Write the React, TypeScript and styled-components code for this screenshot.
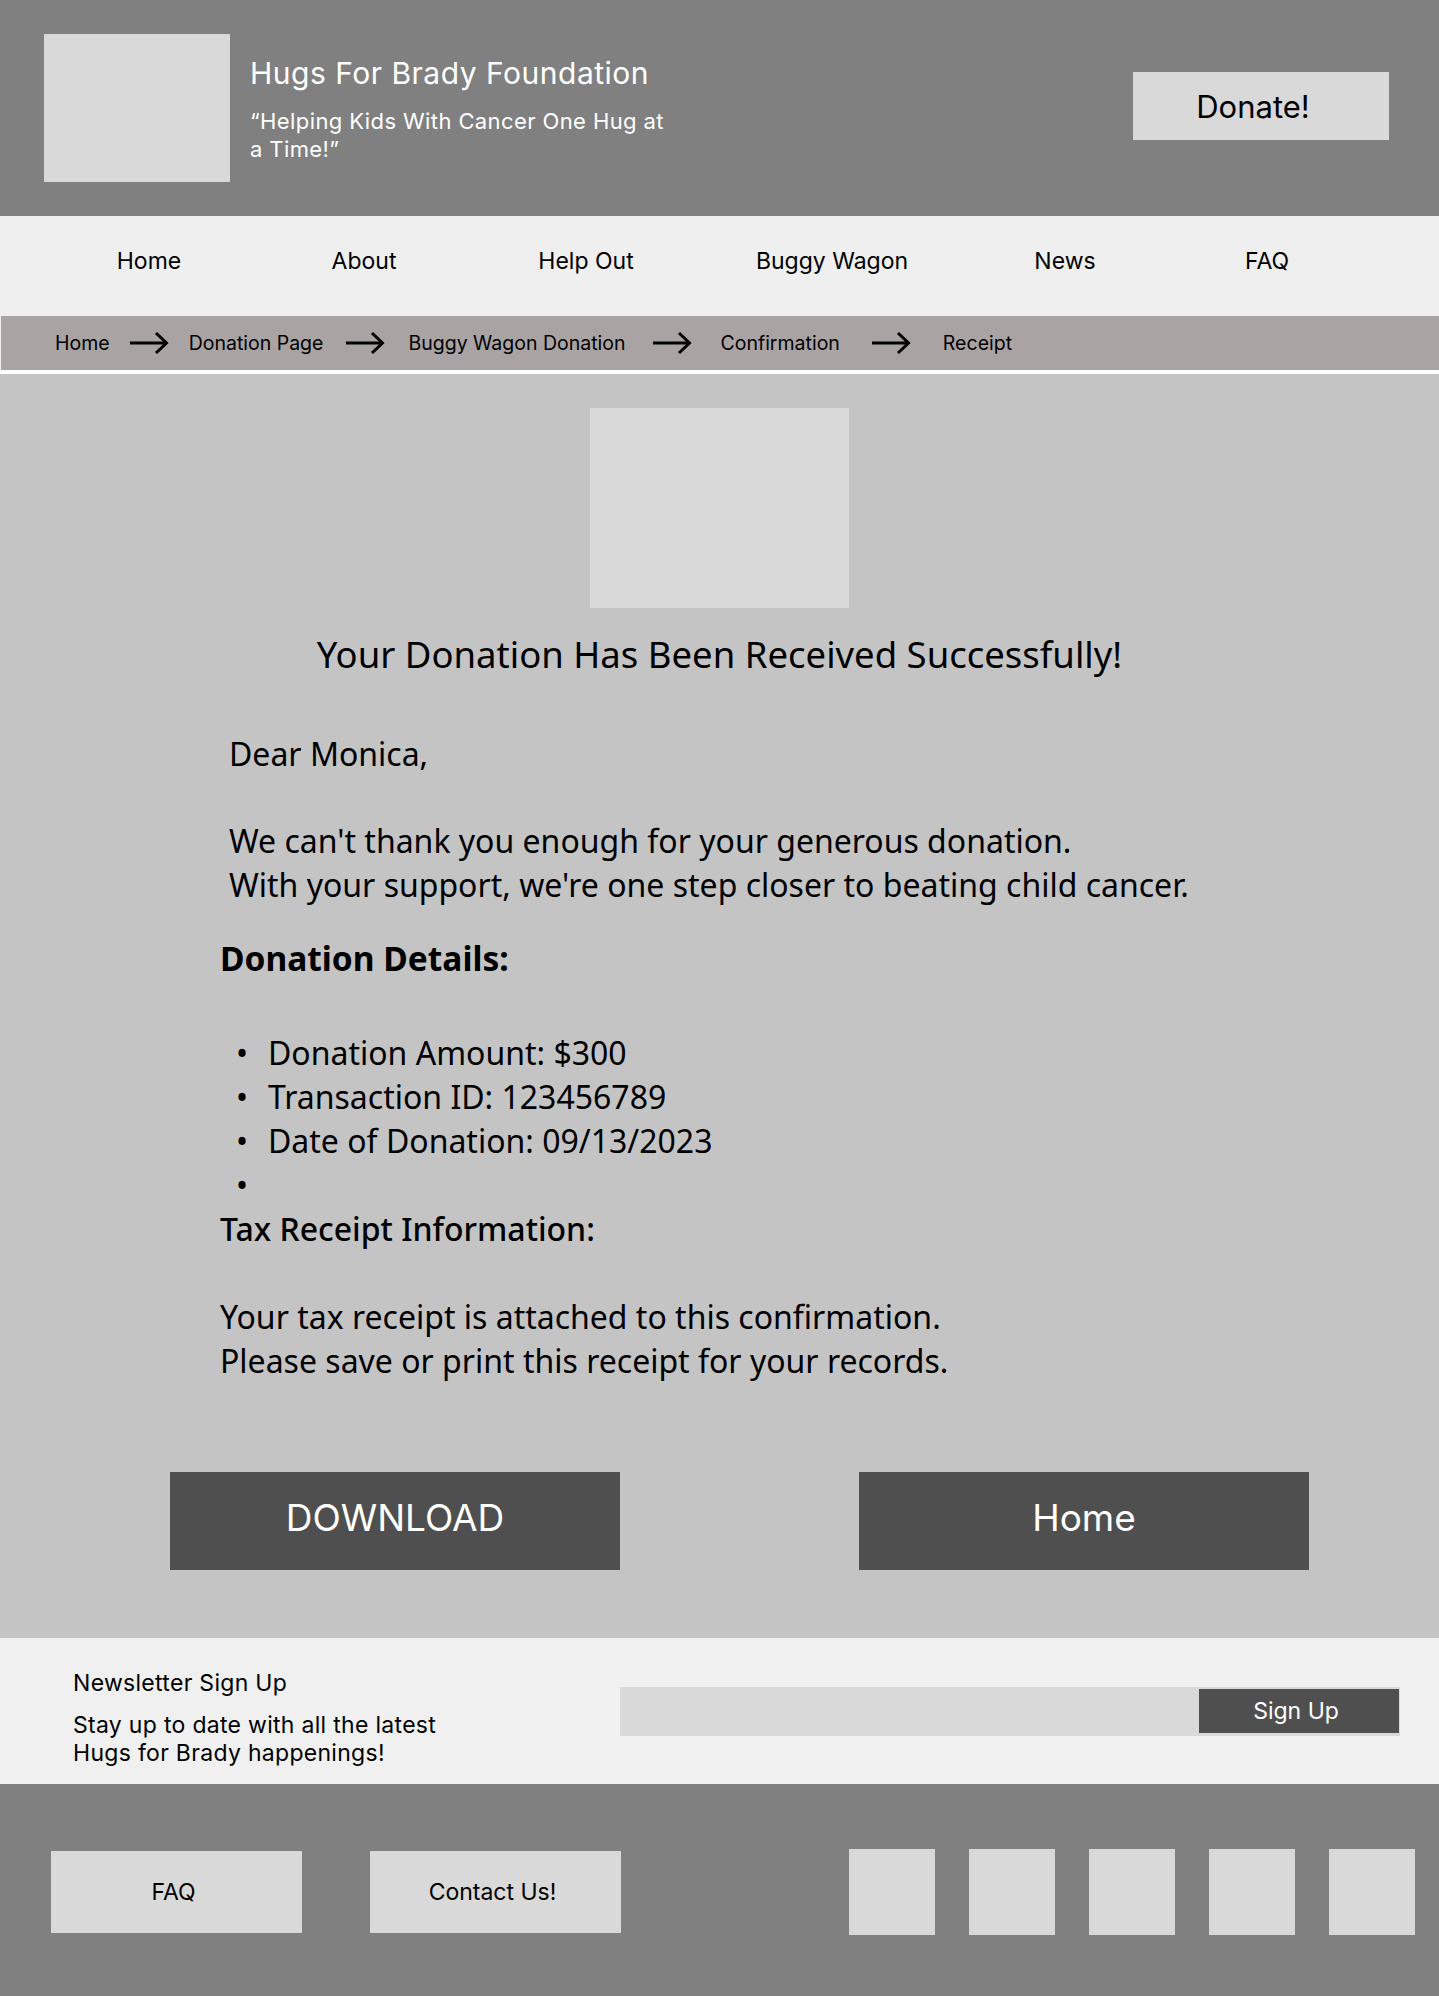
import React from "react";
import styled, { createGlobalStyle } from "styled-components";

const GlobalStyle = createGlobalStyle`
  html, body { margin: 0; padding: 0; }
  body { background: #c4c4c4; font-family: "Inter", "Liberation Sans", sans-serif; }
  *, *::before, *::after { box-sizing: border-box; }
`;

const UI = `"Inter", "Liberation Sans", sans-serif`;
const BODY = `"Noto Sans", "Open Sans", sans-serif`;

const Page = styled.div`
  width: 1439px;
  display: flex;
  flex-direction: column;
`;

/* Header */
const Header = styled.header`
  height: 216px;
  background: #808080;
  display: flex;
  align-items: flex-start;
  padding: 34px 50px 0 44px;
`;

const Logo = styled.div`
  width: 186px;
  height: 148px;
  background: #d9d9d9;
  flex: none;
`;

const Brand = styled.div`
  margin-left: 20px;
  display: flex;
  flex-direction: column;
  color: #fff;
  font-family: ${UI};
`;

const BrandTitle = styled.h1`
  margin: 22px 0 0;
  font-size: 30px;
  line-height: 34px;
  letter-spacing: 0.5px;
  font-weight: 400;
`;

const Tagline = styled.p`
  margin: 17px 0 0;
  font-size: 22px;
  line-height: 28px;
  letter-spacing: 0.4px;
  max-width: 424px;
`;

const DonateButton = styled.button`
  margin: 38px 0 0 auto;
  width: 256px;
  height: 68px;
  background: #d9d9d9;
  border: none;
  padding: 0 16px 0 0;
  font-family: ${UI};
  font-size: 31px;
  color: #000;
  cursor: pointer;
`;

/* Nav */
const Nav = styled.nav`
  height: 100px;
  background: #efefef;
  display: grid;
  grid-template-columns: 214px 216px 228px 264px 202px 202px;
  align-items: center;
  padding-left: 42px;
  padding-bottom: 10px;
`;

const NavLink = styled.a`
  text-align: center;
  font-family: ${UI};
  font-size: 23px;
  color: #000;
  text-decoration: none;
`;

/* Breadcrumb */
const Breadcrumb = styled.div`
  height: 58px;
  background: #a9a4a3;
  border-left: 1px solid #efefef;
  border-bottom: 4px solid #ffffff;
  display: flex;
  align-items: center;
  padding-left: 54px;
`;

const Crumb = styled.span`
  font-family: ${UI};
  font-size: 19.5px;
  color: #000;
`;

const ArrowWrap = styled.span<{ $space: number }>`
  display: flex;
  margin: 0 ${(p) => p.$space}px;
`;

const Arrow = ({ space }: { space: number }) => (
  <ArrowWrap $space={space}>
    <svg width="39" height="24" viewBox="0 0 39 24" fill="none">
      <path d="M0 12 H36" stroke="#000" strokeWidth="3" />
      <path d="M26 2 L36.5 12 L26 22" stroke="#000" strokeWidth="3" strokeLinejoin="miter" />
    </svg>
  </ArrowWrap>
);

/* Main */
const Main = styled.main`
  background: #c4c4c4;
  padding: 34px 0 68px;
  display: flex;
  flex-direction: column;
`;

const Hero = styled.div`
  width: 259px;
  height: 200px;
  background: #d9d9d9;
  align-self: center;
`;

const SuccessTitle = styled.h2`
  margin: 21px 0 0;
  font-family: ${BODY};
  font-size: 36.5px;
  line-height: normal;
  font-weight: 400;
  text-align: center;
  color: #000;
`;

const Receipt = styled.section`
  padding-left: 220px;
  font-family: ${BODY};
  color: #000;
`;

const Letter = styled.p`
  margin: 53px 0 0;
  padding-left: 9px;
  font-size: 32px;
  line-height: 43.6px;
`;

const DetailsHeading = styled.h3`
  margin: 29px 0 0;
  font-size: 33.5px;
  line-height: normal;
  font-weight: 700;
`;

const DetailList = styled.ul`
  margin: 50px 0 0;
  padding: 0;
  list-style: none;
  font-size: 32px;
  line-height: 44px;
`;

const DetailItem = styled.li`
  display: flex;
  height: 44px;
  &::before {
    content: "•";
    width: 48px;
    padding-left: 16px;
    flex: none;
  }
`;

const TaxBlock = styled.p`
  margin: 0;
  font-size: 32px;
  line-height: 44px;
`;

const TaxHeading = styled.span`
  font-weight: 500;
`;

const Actions = styled.div`
  margin-top: 89px;
  display: flex;
  gap: 239px;
  padding-left: 170px;
`;

const ActionButton = styled.button`
  width: 450px;
  height: 98px;
  background: #4f4f4f;
  border: none;
  color: #fff;
  font-family: ${UI};
  font-size: 37px;
  padding-bottom: 8px;
  cursor: pointer;
`;

/* Newsletter */
const Newsletter = styled.section`
  height: 146px;
  background: #f0f0f0;
  display: flex;
  align-items: flex-start;
  padding: 31px 0 0 73px;
`;

const NewsText = styled.div`
  width: 547px;
  font-family: ${UI};
  color: #000;
  font-size: 23px;
  letter-spacing: 0.3px;
`;

const NewsHeading = styled.h4`
  margin: 0;
  font-size: 23px;
  line-height: 28px;
  font-weight: 400;
`;

const NewsBlurb = styled.p`
  margin: 14px 0 0;
  font-size: 23px;
  line-height: 28px;
`;

const EmailField = styled.div`
  margin-top: 18px;
  width: 780px;
  height: 49px;
  background: #d9d9d9;
  display: flex;
  justify-content: flex-end;
  padding: 2px 1px 3px 0;
`;

const SignUpButton = styled.button`
  width: 200px;
  height: 44px;
  background: #4f4f4f;
  border: none;
  color: #fff;
  font-family: ${UI};
  font-size: 23px;
  padding: 0 6px 0 0;
  cursor: pointer;
`;

/* Footer */
const Footer = styled.footer`
  height: 213px;
  background: #808080;
  display: flex;
  align-items: center;
  padding: 2px 0 0 51px;
`;

const FooterLink = styled.a`
  width: 251px;
  height: 82px;
  background: #d9d9d9;
  display: flex;
  align-items: center;
  justify-content: center;
  padding-right: 6px;
  font-family: ${UI};
  font-size: 23px;
  color: #000;
  text-decoration: none;
  & + & { margin-left: 68px; }
`;

const Socials = styled.div`
  margin-left: 228px;
  display: flex;
  gap: 34px;
`;

const SocialIcon = styled.div`
  width: 86px;
  height: 86px;
  background: #d9d9d9;
`;

const navItems = ["Home", "About", "Help Out", "Buggy Wagon", "News", "FAQ"];
const crumbs = ["Home", "Donation Page", "Buggy Wagon Donation", "Confirmation", "Receipt"];
const arrowSpace = [0, 20, 23, 28, 32];
const details = ["Donation Amount: $300", "Transaction ID: 123456789", "Date of Donation: 09/13/2023", ""];

export default function App() {
  return (
    <Page>
      <GlobalStyle />
      <Header>
        <Logo />
        <Brand>
          <BrandTitle>Hugs For Brady Foundation</BrandTitle>
          <Tagline>“Helping Kids With Cancer One Hug at a Time!”</Tagline>
        </Brand>
        <DonateButton>Donate!</DonateButton>
      </Header>
      <Nav>
        {navItems.map((n) => (
          <NavLink key={n} href="#">{n}</NavLink>
        ))}
      </Nav>
      <Breadcrumb>
        {crumbs.map((c, i) => (
          <React.Fragment key={c}>
            {i > 0 && <Arrow space={arrowSpace[i]} />}
            <Crumb>{c}</Crumb>
          </React.Fragment>
        ))}
      </Breadcrumb>
      <Main>
        <Hero />
        <SuccessTitle>Your Donation Has Been Received Successfully!</SuccessTitle>
        <Receipt>
          <Letter>
            Dear Monica,
            <br />
            <br />
            We can't thank you enough for your generous donation.
            <br />
            With your support, we're one step closer to beating child cancer.
          </Letter>
          <DetailsHeading>Donation Details:</DetailsHeading>
          <DetailList>
            {details.map((d, i) => (
              <DetailItem key={i}>{d}</DetailItem>
            ))}
          </DetailList>
          <TaxBlock>
            <TaxHeading>Tax Receipt Information:</TaxHeading>
            <br />
            <br />
            Your tax receipt is attached to this confirmation.
            <br />
            Please save or print this receipt for your records.
          </TaxBlock>
        </Receipt>
        <Actions>
          <ActionButton>DOWNLOAD</ActionButton>
          <ActionButton>Home</ActionButton>
        </Actions>
      </Main>
      <Newsletter>
        <NewsText>
          <NewsHeading>Newsletter Sign Up</NewsHeading>
          <NewsBlurb>
            Stay up to date with all the latest
            <br />
            Hugs for Brady happenings!
          </NewsBlurb>
        </NewsText>
        <EmailField>
          <SignUpButton>Sign Up</SignUpButton>
        </EmailField>
      </Newsletter>
      <Footer>
        <FooterLink href="#">FAQ</FooterLink>
        <FooterLink href="#">Contact Us!</FooterLink>
        <Socials>
          {[0, 1, 2, 3, 4].map((i) => (
            <SocialIcon key={i} />
          ))}
        </Socials>
      </Footer>
    </Page>
  );
}
